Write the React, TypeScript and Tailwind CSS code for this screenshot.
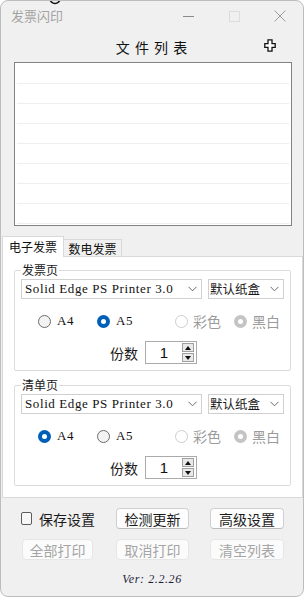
import React from 'react';

const cjk = "font-['Noto_Sans_CJK_SC',sans-serif]";
const serif = "font-['Liberation_Serif',serif]";

function Radio({ checked, disabled }: { checked?: boolean; disabled?: boolean }) {
    if (checked) {
        return (
            <span className={`flex h-[13px] w-[13px] shrink-0 items-center justify-center rounded-full ${disabled ? 'bg-[#c4c4c4]' : 'bg-[#005fb8]'}`}>
                <span className="h-[5px] w-[5px] rounded-full bg-white"></span>
            </span>
        );
    }
    return (
        <span className={`h-[13px] w-[13px] shrink-0 rounded-full border ${disabled ? 'border-[#cdcdcd] bg-white' : 'border-[#6a6a6a] bg-[#f3f3f3]'}`}></span>
    );
}

const Chevron = () => (
    <svg width="9" height="6" viewBox="0 0 9 6" className="shrink-0">
        <path d="M0.5 0.8 L4.5 4.8 L8.5 0.8" fill="none" stroke="#6b6b6b" strokeWidth="1" />
    </svg>
);

function Group({ title, a4 }: { title: string; a4: boolean }) {
    return (
        <div className="relative ml-[11px] w-[277px] rounded-[2px] border border-[#dcdcdc] pl-[6px] pt-[8px] pb-[6px]">
            <span className={`absolute -top-[9px] left-[6px] bg-white px-[1px] text-[12px] leading-[16px] text-[#1a1a1a] ${cjk}`}>{title}</span>

            <div className="flex gap-[6px]">
                <div className="flex h-[20px] w-[181px] items-center justify-between border border-[#d0d0d0] bg-white pl-[3px] pr-[4px]">
                    <span className={`text-[13px] leading-[16px] tracking-[0.6px] text-[#111] ${serif}`}>Solid Edge PS Printer 3.0</span>
                    <Chevron />
                </div>
                <div className="flex h-[20px] w-[76px] items-center justify-between border border-[#d0d0d0] bg-white pl-[1px] pr-[4px]">
                    <span className={`text-[12.5px] leading-[16px] text-[#1a1a1a] ${cjk}`}>默认纸盒</span>
                    <Chevron />
                </div>
            </div>

            <div className="mt-[12px] flex h-[20px] items-center pl-[17px]">
                <span className="flex w-[59px] items-center gap-[6px]">
                    <Radio checked={a4} />
                    <span className={`text-[13px] tracking-[0.6px] text-[#111] ${serif}`}>A4</span>
                </span>
                <span className="flex w-[78px] items-center gap-[6px]">
                    <Radio checked={!a4} />
                    <span className={`text-[13px] tracking-[0.6px] text-[#111] ${serif}`}>A5</span>
                </span>
                <span className="flex w-[59px] items-center gap-[5px]">
                    <Radio disabled />
                    <span className={`text-[14px] leading-[18px] text-[#9a9a9a] ${cjk}`}>彩色</span>
                </span>
                <span className="flex items-center gap-[5px]">
                    <Radio disabled checked />
                    <span className={`text-[14px] leading-[18px] text-[#9a9a9a] ${cjk}`}>黑白</span>
                </span>
            </div>

            <div className="mt-[10px] flex items-center pl-[89px]">
                <span className={`text-[14px] leading-[18px] text-[#1a1a1a] ${cjk}`}>份数</span>
                <div className="ml-[7px] flex h-[23px] w-[52px] items-center border border-[#ababab] bg-white">
                    <span className="flex-1 text-center font-['Liberation_Sans',sans-serif] text-[15px] leading-[18px] text-[#111]">1</span>
                    <div className="mr-[2px] flex flex-col">
                        <span className="flex h-[9px] w-[12px] items-center justify-center border border-[#a0a0a0] bg-[#e9e9e9]">
                            <svg width="6" height="4" viewBox="0 0 6 4"><path d="M3 0 L6 4 L0 4 Z" fill="#111" /></svg>
                        </span>
                        <span className="mt-[1px] flex h-[9px] w-[12px] items-center justify-center border border-[#a0a0a0] bg-[#e9e9e9]">
                            <svg width="6" height="4" viewBox="0 0 6 4"><path d="M0 0 L6 0 L3 4 Z" fill="#111" /></svg>
                        </span>
                    </div>
                </div>
            </div>
        </div>
    );
}

function Btn({ label, disabled, w }: { label: string; disabled?: boolean; w: string }) {
    return (
        <div className={`flex h-[21px] ${w} items-center justify-center rounded-[4px] border text-[14px] leading-[18px] ${cjk} ${disabled ? 'border-[#e6e6e6] bg-[#fbfbfb] text-[#a5a5a5]' : 'border-[#d0d0d0] border-b-[#bcbcbc] bg-[#fdfdfd] text-[#1a1a1a]'}`}>
            {label}
        </div>
    );
}

export default function App() {
    return (
        <div className="h-[597px] w-[304px] bg-white">
            <div className="relative flex h-[597px] w-[304px] flex-col overflow-hidden rounded-[8px] border border-[#bdbdbd] bg-[#f0f0f0]">
                <svg width="14" height="5" viewBox="0 0 14 5" className="absolute left-[47px] top-0">
                    <circle cx="7" cy="-2.5" r="5" fill="none" stroke="#111" strokeWidth="1.6" />
                </svg>

                {/* title bar */}
                <div className="flex h-[30px] items-center">
                    <span className={`pl-[10px] text-[13px] leading-[18px] text-[#a3a3a3] ${cjk}`}>发票闪印</span>
                    <div className="ml-auto flex h-full">
                        <div className="flex w-[46px] items-center justify-center">
                            <span className="h-px w-[11px] bg-[#8a8a8a]"></span>
                        </div>
                        <div className="flex w-[46px] items-center justify-center">
                            <span className="h-[11px] w-[11px] border border-[#dcdcdc]"></span>
                        </div>
                        <div className="flex w-[46px] items-center justify-center">
                            <svg width="12" height="12" viewBox="0 0 12 12">
                                <path d="M0.5 0.5 L11.5 11.5 M11.5 0.5 L0.5 11.5" stroke="#9a9a9a" strokeWidth="1" />
                            </svg>
                        </div>
                    </div>
                </div>

                {/* heading */}
                <div className="relative flex h-[31px] items-center justify-center">
                    <span className={`text-[14px] leading-[18px] tracking-[1px] text-[#111] ${cjk}`}>文 件 列 表</span>
                    <svg width="12" height="13" viewBox="0 0 12 13" className="absolute right-[27px] top-[8px]">
                        <path d="M4 0.8 H8 V4.6 H11.2 V8.4 H8 V12.2 H4 V8.4 H0.8 V4.6 H4 Z" fill="#fff" stroke="#111" strokeWidth="1.3" />
                    </svg>
                </div>

                {/* list */}
                <div className="ml-[13px] h-[164px] w-[278px] border border-[#828282] bg-white px-[2px] pt-[1px]">
                    {Array.from({ length: 8 }).map((_, i) => (
                        <div key={i} className="h-[20px] border-b border-[#eeeeee]"></div>
                    ))}
                </div>

                {/* tabs */}
                <div className={`mt-[10px] ml-[1px] flex items-end text-[12px] ${cjk}`}>
                    <div className="relative z-10 -mb-px flex h-[21px] w-[62px] items-center justify-center border border-b-0 border-[#d9d9d9] bg-white pb-[1px] text-[#111]">电子发票</div>
                    <div className="flex h-[17px] w-[58px] items-center justify-center border border-b-0 border-l-0 border-[#d9d9d9] bg-[#f0f0f0] pt-[1px] text-[#111]">数电发票</div>
                </div>
                <div className="ml-[1px] h-[242px] border border-[#d9d9d9] bg-white pt-[13px]">
                    <Group title="发票页" a4={false} />
                    <div className="h-[14px]"></div>
                    <Group title="清单页" a4={true} />
                </div>

                {/* bottom buttons */}
                <div className="mt-[10px] grid grid-cols-[73px_73px_74px] gap-x-[21px] gap-y-[10px] pl-[21px]">
                    <div className="-ml-px flex h-[21px] items-center gap-[7px]">
                        <span className="h-[13px] w-[13px] rounded-[2px] border border-[#5c5c5c] bg-[#f7f7f7]"></span>
                        <span className={`whitespace-nowrap text-[14px] leading-[18px] text-[#1a1a1a] ${cjk}`}>保存设置</span>
                    </div>
                    <Btn label="检测更新" w="w-[73px]" />
                    <Btn label="高级设置" w="w-[74px]" />
                    <Btn label="全部打印" w="w-[71px]" disabled />
                    <Btn label="取消打印" w="w-[73px]" disabled />
                    <Btn label="清空列表" w="w-[74px]" disabled />
                </div>

                <div className="mt-[11px] flex justify-center">
                    <span className="font-['Liberation_Serif',serif] text-[12px] italic leading-[16px] tracking-[0.6px] text-[#1e1e3c]">Ver: 2.2.26</span>
                </div>
            </div>
        </div>
    );
}
